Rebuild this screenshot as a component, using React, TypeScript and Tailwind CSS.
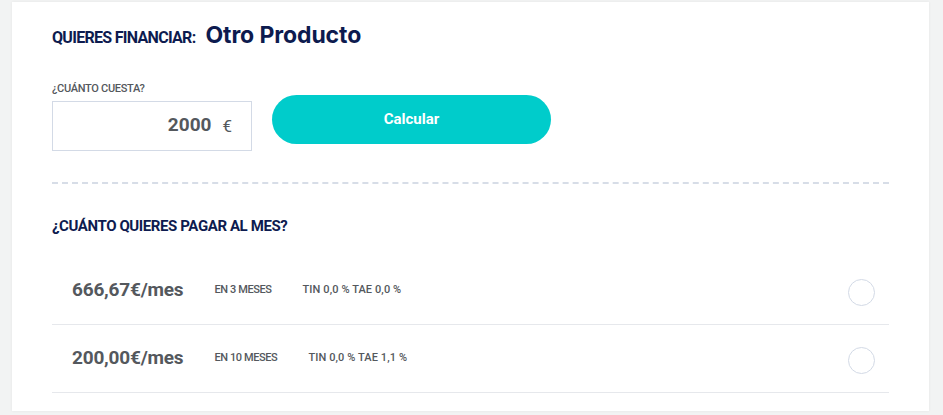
import React from "react";

const cond = { fontFamily: "Roboto, 'Noto Sans', sans-serif" };
const geo = { fontFamily: "Inter, 'Noto Sans', sans-serif" };

function Row({ amount, term, rate }: { amount: string; term: string; rate: string }) {
  return (
    <div className="flex items-center h-[68px] border-b border-[#e6e8ec] pl-[20px] pr-[14px]">
      <div className="text-[19px] font-bold text-[#54585d] tracking-[-0.2px]" style={cond}>{amount}</div>
      <div className="ml-[31px] text-[11px] font-medium text-[#54585d] tracking-[-0.4px]" style={cond}>{term}</div>
      <div className="ml-[31px] flex-1 text-[11px] font-medium text-[#54585d] tracking-[0.1px]" style={cond}>{rate}</div>
      <div className="w-[27px] h-[27px] rounded-full border border-[#d3dae6] mt-[4px]" />
    </div>
  );
}

export default function App() {
  return (
    <div className="w-[943px] h-[415px] bg-[#f2f3f3] overflow-hidden pt-[2px] pl-[12px]">
      <div className="w-[917px] h-[409px] bg-white shadow-[0_0_3px_rgba(0,0,0,0.06)] px-[40px] pt-[16px]">
        <div className="flex items-baseline">
          <span className="text-[16px] font-bold text-[#0d1b4f] tracking-[-0.7px]" style={cond}>QUIERES FINANCIAR:</span>
          <span className="ml-[10px] text-[23px] font-bold text-[#0d1b4f] tracking-[-0.1px]" style={geo}>Otro Producto</span>
        </div>
        <div className="flex items-start mt-[29px]">
          <div className="flex flex-col">
            <span className="text-[11px] leading-[14px] font-medium text-[#54585d] tracking-[-0.3px]" style={cond}>¿CUÁNTO CUESTA?</span>
            <div className="mt-[5px] w-[200px] h-[50px] border border-[#d3dae6] flex items-center justify-end pr-[19px]">
              <span className="text-[19px] font-bold text-[#54585d]" style={cond}>2000</span>
              <span className="ml-[11px] mt-[3px] text-[17px] text-[#54585d]" style={cond}>€</span>
            </div>
          </div>
          <button className="ml-[20px] mt-[13px] w-[279px] h-[49px] rounded-full bg-[#00cccb] text-white text-[15px] font-bold" style={cond}>Calcular</button>
        </div>
        <div className="mt-[31px] border-t-2 border-dashed border-[#d7dde7]" />
        <div className="mt-[31px] text-[15px] font-bold text-[#0d1b4f] tracking-[-0.4px]" style={cond}>¿CUÁNTO QUIERES PAGAR AL MES?</div>
        <div className="mt-[20px]">
          <Row amount="666,67€/mes" term="EN 3 MESES" rate="TIN 0,0 % TAE 0,0 %" />
          <Row amount="200,00€/mes" term="EN 10 MESES" rate="TIN 0,0 % TAE 1,1 %" />
        </div>
      </div>
    </div>
  );
}
